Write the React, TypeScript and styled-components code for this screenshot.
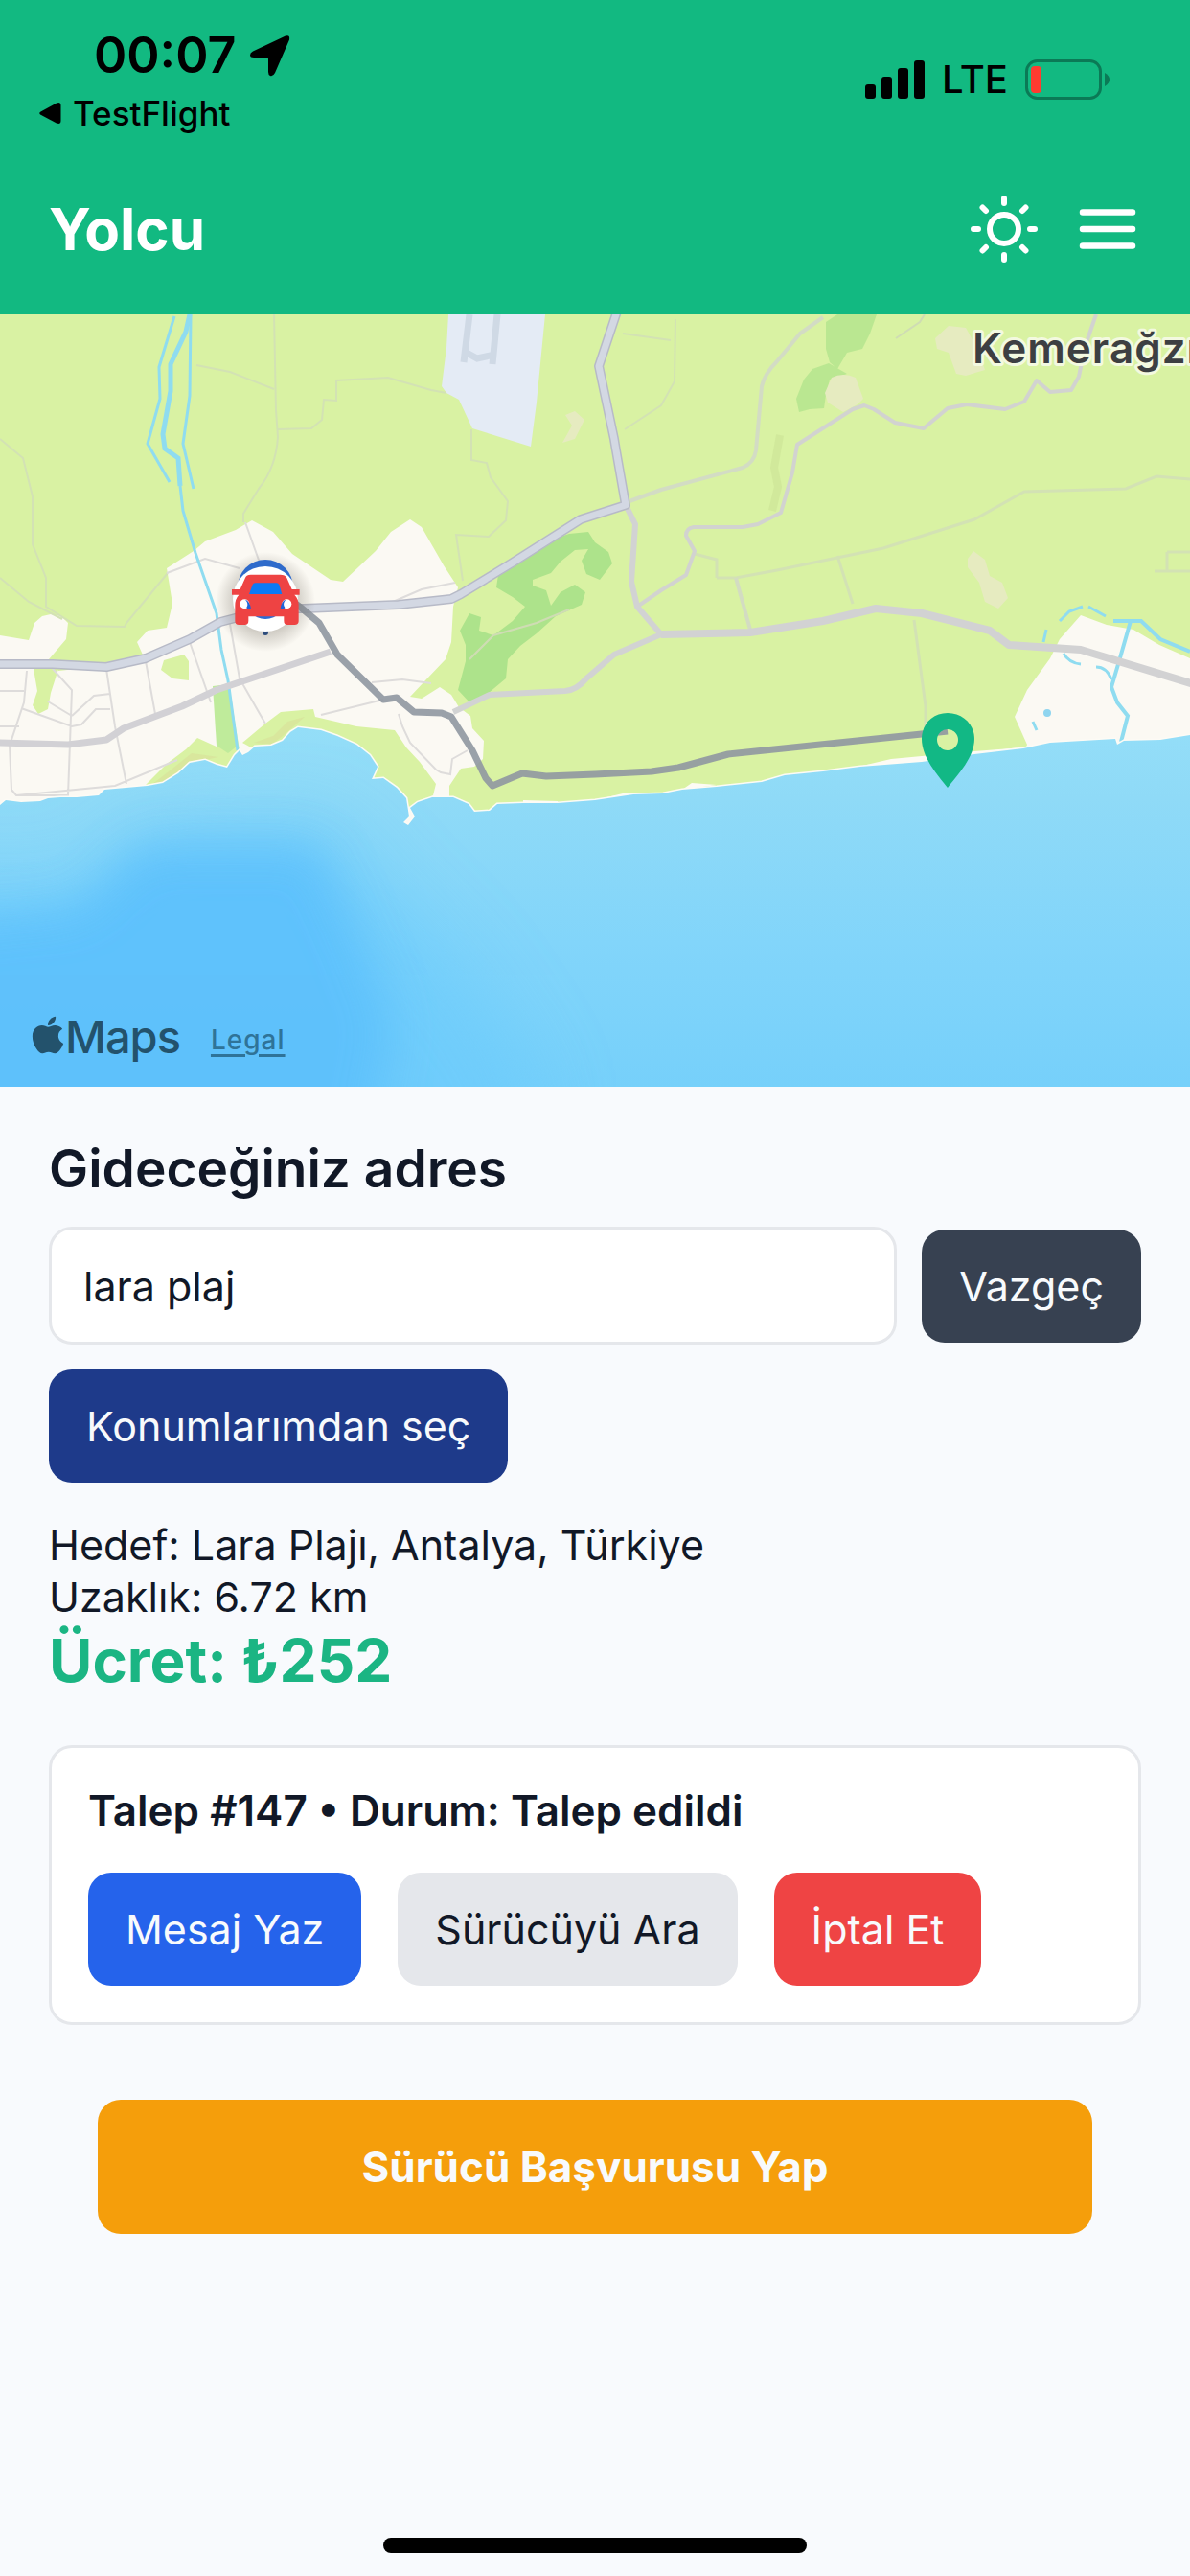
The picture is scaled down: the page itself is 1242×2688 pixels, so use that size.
import { useState } from 'react';
import { FaApple } from 'react-icons/fa';
import styled, { createGlobalStyle } from 'styled-components';

const GlobalStyle = createGlobalStyle`
    * {
        box-sizing: border-box;
    }
    body {
        margin: 0;
        background-color: #f8fafd;
        color: #111827;
        font-family: Inter, "Liberation Sans", sans-serif;
        font-size: 43px;
        line-height: 54px;
    }
    h1, h2, h3, p {
        margin: 0;
    }
    button, input {
        font: inherit;
    }
    svg {
        display: block;
    }
`;

const Screen = styled.div`
    display: flex;
    flex-direction: column;
    min-height: 100vh;
`;

const Header = styled.header`
    background-color: #12b981;
`;

const StatusBar = styled.div`
    display: flex;
    justify-content: space-between;
    align-items: center;
    padding: 28px 84px 0 40px;
    color: black;
`;

const StatusLeft = styled.div`
    display: flex;
    flex-direction: column;
    gap: 10px;
`;

const Clock = styled.div`
    display: flex;
    align-items: center;
    gap: 14px;
    padding-left: 58px;
    font-size: 52px;
    font-weight: 600;
    line-height: 60px;
`;

const BackLink = styled.a`
    display: flex;
    align-items: center;
    gap: 12px;
    color: inherit;
    font-size: 35px;
    font-weight: 500;
    line-height: 40px;
    text-decoration: none;
`;

const StatusRight = styled.div`
    display: flex;
    align-items: center;
    gap: 18px;
    font-size: 40px;
    font-weight: 500;
`;

const AppBar = styled.div`
    display: flex;
    justify-content: space-between;
    align-items: center;
    padding: 62px 51px 50px;
    color: white;
`;

const Title = styled.h1`
    font-size: 60px;
    font-weight: 700;
    line-height: 78px;
`;

const AppBarActions = styled.div`
    display: flex;
    gap: 34px;
`;

const IconButton = styled.button`
    padding: 0;
    border: none;
    background: none;
    color: inherit;
    cursor: pointer;
`;

const MapWrapper = styled.section`
    position: relative;
    overflow: hidden;
    svg.map {
        width: 100%;
        height: auto;
    }
`;

const Attribution = styled.div`
    position: absolute;
    left: 32px;
    bottom: 22px;
    display: flex;
    align-items: center;
    gap: 32px;
`;

const MapsLogo = styled.span`
    display: flex;
    align-items: center;
    color: #23526c;
    font-size: 47px;
    font-weight: 500;
    line-height: 60px;
    letter-spacing: -1px;
`;

const AppleMark = styled(FaApple)`
    width: 36px;
    height: 44px;
    margin-bottom: 4px;
`;

const LegalLink = styled.a`
    padding-top: 6px;
    color: #2f7398;
    font-size: 28px;
    font-weight: 500;
    line-height: 40px;
    letter-spacing: 1px;
    text-underline-offset: 5px;
    text-decoration-thickness: 3px;
`;

const Content = styled.main`
    display: flex;
    flex-direction: column;
    flex: 1;
    padding: 52px 51px 24px;
`;

const AddressForm = styled.form`
    display: grid;
    grid-template-columns: 1fr auto;
    align-items: center;
    justify-items: start;
    gap: 26px;
`;

const AddressLabel = styled.label`
    margin-bottom: 28px;
    font-size: 55px;
    font-weight: 600;
    line-height: 66px;
`;

const AddressInput = styled.input`
    width: 100%;
    height: 123px;
    padding: 0 33px;
    border: 3px solid #e5e7eb;
    border-radius: 24px;
    background-color: white;
    color: #111827;
    outline: none;
`;

const Button = styled.button<{ $bg: string; $color?: string }>`
    height: 118px;
    padding: 0 39px;
    border: none;
    border-radius: 24px;
    background-color: ${(props) => props.$bg};
    color: ${(props) => props.$color ?? '#f8fafc'};
    white-space: nowrap;
    cursor: pointer;
`;

const Summary = styled.div`
    padding: 38px 0 48px;
`;

const Fare = styled.p`
    color: #1bb583;
    font-size: 62px;
    font-weight: 700;
    line-height: 80px;
`;

const RequestCard = styled.section`
    display: flex;
    flex-direction: column;
    gap: 38px;
    padding: 38px;
    border: 3px solid #e5e7eb;
    border-radius: 24px;
    background-color: white;
`;

const RequestTitle = styled.h2`
    font-size: 44px;
    font-weight: 600;
    line-height: 54px;
`;

const RequestActions = styled.div`
    display: flex;
    gap: 38px;
`;

const ApplyButton = styled(Button)`
    height: 140px;
    margin: 78px 51px 0;
    font-size: 44px;
    font-weight: 700;
`;

const HomeIndicator = styled.div`
    align-self: center;
    width: 442px;
    height: 16px;
    margin-top: auto;
    border-radius: 8px;
    background-color: black;
`;

const SHORE =
    'M0 512L6 507L22 509L42 508L50 505L63 504L80 504L103 502L109 496L154 492L170 489L186 479L198 468L214 465L226 470L237 473L245 460L250 455L253 460L259 457L266 451L283 450L295 445L303 436L311 431L335 434L352 440L372 449L386 460L394 472L388 485L400 484L414 494L424 505L427 524L421 530L426 533L433 524L428 515L436 509L451 504L473 504L489 511L495 519L511 518L519 511L546 510L582 510L621 507L661 501L692 500L712 496L748 493L795 488L819 481L859 477L898 472L962 467L1017 459L1068 453L1096 447L1164 443L1166 449L1173 445L1211 444L1242 439';

const HIGHWAY =
    'M-6 365L55 365L111 368L152 359L198 339L230 321L253 315L285 307L317 307L416 303L471 297L481 292L535 259L606 214L653 199L643 142L641 130L625 54L645 -6';

const CarMarker = () => (
    <g>
        <circle cx="277" cy="300" r="52" fill="url(#carShadow)" />
        <circle cx="277" cy="285" r="29" fill="#2f6bcb" />
        <circle cx="277" cy="332" r="3" fill="#2d4c7c" />
        <circle cx="277" cy="297" r="34" fill="white" />
        <circle cx="277" cy="296" r="22" fill="#2c6bd4" />
        <g transform="translate(220 232) scale(0.3333)">
            <path
                fill="#ee4343"
                d="M66 165H92L108 129Q112 119 125 119H218Q232 119 238 129L254 165H278V182H262Q275 195 275 215V265Q275 276 262 276H240Q229 276 229 263V250H118V263Q118 276 106 276H88Q76 276 76 264V215Q76 195 88 182H66Z"
            />
            <path fill="#0c7af6" d="M120 180L131 150Q133 145 139 145H206Q212 145 214 150L223 180Z" />
            <circle cx="106" cy="211" r="15" fill="white" />
            <circle cx="238" cy="211" r="15" fill="white" />
            <path fill="#1f63d8" d="M108 197Q122 200 126 226Q115 228 112 222Q120 210 108 197ZM235 197Q221 200 218 226Q229 228 232 222Q223 210 235 197Z" />
        </g>
    </g>
);

const RouteMap = () => (
    <svg className="map" viewBox="0 0 1242 806" role="img" aria-label="Harita">
        <defs>
            <linearGradient id="sea" x1="0" y1="430" x2="0" y2="806" gradientUnits="userSpaceOnUse">
                <stop offset="0" stopColor="#94def8" />
                <stop offset="0.2" stopColor="#8fdaf7" />
                <stop offset="0.6" stopColor="#82d5fa" />
                <stop offset="1" stopColor="#76d0fa" />
            </linearGradient>
            <radialGradient id="carShadow">
                <stop offset="0.5" stopColor="#5c5448" stopOpacity="0.35" />
                <stop offset="1" stopColor="#5c5448" stopOpacity="0" />
            </radialGradient>
            <filter id="soft" x="-50%" y="-50%" width="200%" height="200%">
                <feGaussianBlur stdDeviation="24" />
            </filter>
            <filter id="softer" x="-50%" y="-50%" width="200%" height="200%">
                <feGaussianBlur stdDeviation="40" />
            </filter>
            <clipPath id="seaClip">
                <path d={`${SHORE}V806H0Z`} />
            </clipPath>
        </defs>

        {/* land */}
        <rect width="1242" height="806" fill="#d9f2a3" />
        <path fill="#fbf9f3" d="M0 335L30 340L36 322L44 315L53 313L64 315L71 322L69 339L51 360L61 372L152 362L143 342L154 330L174 327L180 302L174 265L202 247L214 237L246 225L263 215L285 227L305 250L345 277L358 279L392 247L408 227L428 214L440 222L463 262L478 285L473 305L471 342L465 360L444 382L428 399L440 401L459 389L471 397L479 410L491 419L493 432L505 445L504 464L495 472L481 474L469 492L469 540L0 540Z" />
        <path fill="#fbf9f3" d="M1128 314L1155 324L1183 329L1210 345L1242 359V460H1068L1072 449L1059 420L1072 392L1096 359L1106 339Z" />
        <path fill="#d9f2a3" d="M452 502L455 490L438 467L424 452L412 434L372 430L329 420L327 412L293 415L277 427L253 447L262 452L300 470L420 520L436 512Z" />
        <path fill="#d9f2a3" d="M152 491L174 469L194 454L206 442L228 452L224 392L240 392L250 455L235 485Z" />
        <path fill="#bfeb9b" d="M222 388L239 386L248 450L238 458L226 450Z" />
        <path fill="#d9f2a3" d="M171 361L192 355L197 362V382L180 380L168 371ZM35 370L61 370L53 395L50 412L40 417L34 408L39 393Z" />
        <path fill="#d9e09a" opacity="0.6" d="M265 447L285 440L300 425L318 420L295 440L283 449ZM158 491L180 474L200 458L228 462L200 468L170 489Z" />
        <path fill="#ade38b" d="M594 229L614 227L621 238L635 248L639 260L626 277L612 271L607 257L614 245L600 246L585 258L575 270L556 277L556 283L570 288L575 304L585 290L600 282L611 290L607 303L580 315L560 333L543 346L530 360L528 380L510 395L491 406L478 392L486 362L486 345L480 330L490 312L502 316L500 330L515 335L535 320L548 305L535 295L518 285L520 272L545 250L570 237Z" />
        <path fill="#b4e58e" opacity="0.85" d="M862 8L874 0H915L908 20L900 36L884 40L874 57L866 50L862 36ZM848 57L865 51L884 62L866 68L862 84L860 98L845 99L834 102L831 88L839 68Z" />
        <path fill="#e6ebc0" d="M868 66Q880 60 893 66L901 88L895 94L880 102L864 92L861 82ZM976 25L990 12L1008 14L1020 36L1028 58L1008 64L998 62L990 40L978 36ZM1010 255L1016 247L1028 256L1033 273L1046 280L1052 296L1042 307L1028 300L1022 280L1010 264ZM590 105L600 101L610 110L600 130L587 134L597 116Z" />
        <path fill="none" stroke="#cde697" strokeWidth="8" opacity="0.7" d="M814 126L808 160L812 180L806 205" />

        {/* airport */}
        <path fill="#e4ebf5" d="M468 0L466 35L461 75L466 82L479 89L493 119L554 138L560 92L569 0Z" />
        <path fill="none" stroke="#cfd9e5" strokeWidth="7" d="M490 0L484 50M519 0L514 52M487 40L498 46L516 42" />

        {/* small roads */}
        <g fill="none" stroke="#d3e2b4" strokeWidth="2">
            <path d="M286 0L288 100L290 128Q288 160 270 182L254 208V217M205 53L240 60L286 78M290 120L325 119L336 110L338 89L351 90V69L405 66L450 79L466 82M492 120V152L508 155L512 170L530 195L528 215L510 232L476 230L483 278" />
            <path d="M0 130L24 150L34 190V240L48 275L48 305L80 325L130 326L132 322L175 270M0 275L30 300L65 318M705 5L704 70L690 95L652 120M650 20L700 27" />
            <path strokeWidth="3" d="M748 275L768 275L811 267L922 244L1017 214L1069 185L1175 182L1207 169L1242 172M874 252L890 302M954 319L966 409L966 434M725 250L748 256V275M1218 248H1242M1218 248V268H1242M1205 268H1218" />
            <path strokeWidth="4" stroke="#d3dcc2" d="M768 275L783 329" />
            <path strokeWidth="2" stroke="#cfdcb4" d="M490 360L515 335L560 322L594 308M935 25L960 8L965 0" />
        </g>
        <g fill="none" stroke="#dedcdb" strokeWidth="2">
            <path d="M256 217L272 262M174 270L214 255L250 265M240 323L250 380L270 415L277 427M198 342L220 405M28 372L25 405L10 450L12 496L17 502L71 502L75 392L55 370M0 393H25M75 419L98 398L115 396M50 404L75 419M22 411L75 430L85 428L100 412H115M111 370L120 430L132 490M152 362L162 417M17 502L120 492L185 465M0 430H20M335 418L400 402M388 384L420 381L450 385M416 417L420 430L428 447L455 475L460 478L470 480L472 464L488 455M410 300L440 287L475 280" />
        </g>

        {/* streams */}
        <g fill="none" stroke="#8fdcf0" strokeWidth="3">
            <path strokeWidth="5" d="M198 0L194 18L178 52V80L170 125L172 140L186 150L188 179" />
            <path d="M188 179L191 205L204 249L226 312L231 350L238 382L248 455M182 2L166 55L167 88L154 135L177 175M199 0L198 85L191 135L202 182" />
            <path strokeWidth="4" d="M1180 320L1168 362L1160 389L1166 405L1177 419L1170 446M1162 320H1191L1211 339L1242 352" />
            <path d="M1089 342L1092 329M1106 320L1116 310L1130 305M1136 305L1154 315M1110 354Q1116 364 1128 365M1144 368Q1155 368 1160 381M1078 425L1082 434" />
        </g>
        <circle cx="1093" cy="416" r="4" fill="#8fd5ef" />

        {/* main roads */}
        <g fill="none" strokeLinejoin="round">
            <path stroke="#d3dcc4" strokeWidth="4" d="M657 195L690 183L775 160Q787 155 789 142L795 75Q798 62 811 49L835 20L859 3" />
            <path stroke="#d2d3d0" strokeWidth="4" d="M665 305L690 288L716 272L725 247L716 231Q716 223 724 222L775 222L791 219L815 207L827 165L832 136L890 99L902 95L912 99L934 113L964 119L989 98L1009 94L1049 99L1069 91L1082 69L1096 81L1118 79L1126 65L1132 35L1144 0" />
            <path stroke="#d2d3d3" strokeWidth="6" d="M653 199L663 219L659 279L665 305L690 334L641 355L612 380Q602 392 590 393L511 397L473 415" />
            <path stroke="#d2d2d3" strokeWidth="8" d="M690 334L783 332L859 320L914 307L962 312L1033 330L1053 345L1128 350L1246 386" />
            <path stroke="#d2d1d5" strokeWidth="7" d="M-4 447L71 449L111 444L129 432L190 409L226 392L345 352" />
            <path stroke="#b7bac7" strokeWidth="10" d={HIGHWAY} />
            <path stroke="#d3d8e3" strokeWidth="7" d={HIGHWAY} />
        </g>

        {/* sea */}
        <path d={SHORE} fill="none" stroke="#fdfbf5" strokeWidth="3" />
        <path d="M900 471L930 464L962 461L1017 456L1068 452L1017 459L962 467ZM712 496L722 489L748 491ZM546 510V507L582 508V511ZM621 507L650 500L661 500Z" fill="#fdfbf5" />
        <path d={`${SHORE}V806H0Z`} fill="url(#sea)" />
        <g clipPath="url(#seaClip)">
            <path filter="url(#softer)" fill="#6ccbfc" opacity="0.7" d="M-120 600L90 600L150 540L340 530L400 600L480 680L560 800L560 920H-120Z" />
            <path filter="url(#soft)" fill="#5bc0fc" opacity="0.85" d="M-120 640L80 620L150 555L330 555L370 640L410 740L380 900H-120Z" />
        </g>

        {/* route */}
        <path
            fill="none"
            stroke="#8f97a1"
            strokeOpacity="0.9"
            strokeWidth="7"
            strokeLinejoin="round"
            d="M306 300L314 306L333 322L352 355L400 402L414 400L432 415L461 416L471 420L493 455L507 484L514 492L545 479L570 482L621 480L680 477L708 473L760 459L962 438L989 435"
        />
        <CarMarker />
        <path
            fill="#12b885"
            fillRule="evenodd"
            d="M989 416C973 416 962 428 962 443C962 462 978 480 989 494C1000 480 1017 462 1017 443C1017 428 1005 416 989 416ZM989 433A11 11 0 1 1 989 455A11 11 0 1 1 989 433Z"
        />
        <text
            x="1015"
            y="51"
            fontSize="44"
            fontWeight="600"
            letterSpacing="1"
            fill="#3d3f42"
            stroke="#f3f9e0"
            strokeWidth="6"
            strokeLinejoin="round"
            paintOrder="stroke"
        >
            Kemerağzı
        </text>
    </svg>
);

const App = () => {
    const [address, setAddress] = useState('lara plaj');

    return (
        <Screen>
            <GlobalStyle />
            <Header>
                <StatusBar>
                    <StatusLeft>
                        <Clock>
                            00:07
                            <svg width="44" height="44" viewBox="0 0 44 44">
                                <path d="M38 1.500Q43 0 42 5.500L27 40Q25 44 22 43Q20 42 20 39V25.500Q20 24 18.500 24H5Q1 24 1 21.500Q1 19 4 17.500Z" />
                            </svg>
                        </Clock>
                        <BackLink href="#">
                            <svg width="24" height="24" viewBox="0 0 24 24">
                                <path d="M2.500 10.500L19 1.500Q23.500 0 23.500 4V20Q23.500 24 19 22.500L2.500 13.800Q0 12 2.500 10.500Z" />
                            </svg>
                            TestFlight
                        </BackLink>
                    </StatusLeft>
                    <StatusRight>
                        <svg width="62" height="40" viewBox="0 0 62 40">
                            <rect y="25" width="11" height="15" rx="3" />
                            <rect x="17" y="17" width="11" height="23" rx="3" />
                            <rect x="34" y="8" width="11" height="32" rx="3" />
                            <rect x="51" width="11" height="40" rx="3" />
                        </svg>
                        LTE
                        <svg width="88" height="42" viewBox="0 0 88 42">
                            <rect x="1.500" y="1.500" width="77" height="39" rx="11" fill="none" stroke="#0b7a56" strokeWidth="3" />
                            <rect x="6" y="7" width="11" height="28" rx="4" fill="#ff3b30" />
                            <path d="M83 14Q88 17 88 21Q88 25 83 28Z" fill="#0b7a56" />
                        </svg>
                    </StatusRight>
                </StatusBar>
                <AppBar>
                    <Title>Yolcu</Title>
                    <AppBarActions>
                        <IconButton aria-label="Tema">
                            <svg width="78" height="78" viewBox="-39 -39 78 78" fill="none" stroke="currentColor" strokeWidth="6" strokeLinecap="round">
                                <circle r="15" />
                                <path d="M0 -27V-32M0 27V32M-27 0H-32M27 0H32M-19 -19L-22.500 -22.500M19 -19L22.500 -22.500M-19 19L-22.500 22.500M19 19L22.500 22.500" />
                            </svg>
                        </IconButton>
                        <IconButton aria-label="Menü">
                            <svg width="70" height="78" viewBox="-35 -39 70 78" fill="none" stroke="currentColor" strokeWidth="6.500" strokeLinecap="round">
                                <path d="M-26 -17.500H26M-26 0H26M-26 17.500H26" />
                            </svg>
                        </IconButton>
                    </AppBarActions>
                </AppBar>
            </Header>

            <MapWrapper>
                <RouteMap />
                <Attribution>
                    <MapsLogo>
                        <AppleMark />
                        Maps
                    </MapsLogo>
                    <LegalLink href="#">Legal</LegalLink>
                </Attribution>
            </MapWrapper>

            <Content>
                <AddressLabel htmlFor="address">Gideceğiniz adres</AddressLabel>
                <AddressForm onSubmit={(e) => e.preventDefault()}>
                    <AddressInput id="address" value={address} onChange={(e) => setAddress(e.target.value)} />
                    <Button type="button" $bg="#374151">Vazgeç</Button>
                    <Button type="button" $bg="#1e3a8a">Konumlarımdan seç</Button>
                </AddressForm>

                <Summary>
                    <p>Hedef: Lara Plajı, Antalya, Türkiye</p>
                    <p>Uzaklık: 6.72 km</p>
                    <Fare>Ücret: ₺252</Fare>
                </Summary>

                <RequestCard>
                    <RequestTitle>Talep #147 • Durum: Talep edildi</RequestTitle>
                    <RequestActions>
                        <Button $bg="#2563eb">Mesaj Yaz</Button>
                        <Button $bg="#e5e7eb" $color="#111827">Sürücüyü Ara</Button>
                        <Button $bg="#ef4444">İptal Et</Button>
                    </RequestActions>
                </RequestCard>

                <ApplyButton $bg="#f59e0b">Sürücü Başvurusu Yap</ApplyButton>
                <HomeIndicator />
            </Content>
        </Screen>
    );
};

export default App;
